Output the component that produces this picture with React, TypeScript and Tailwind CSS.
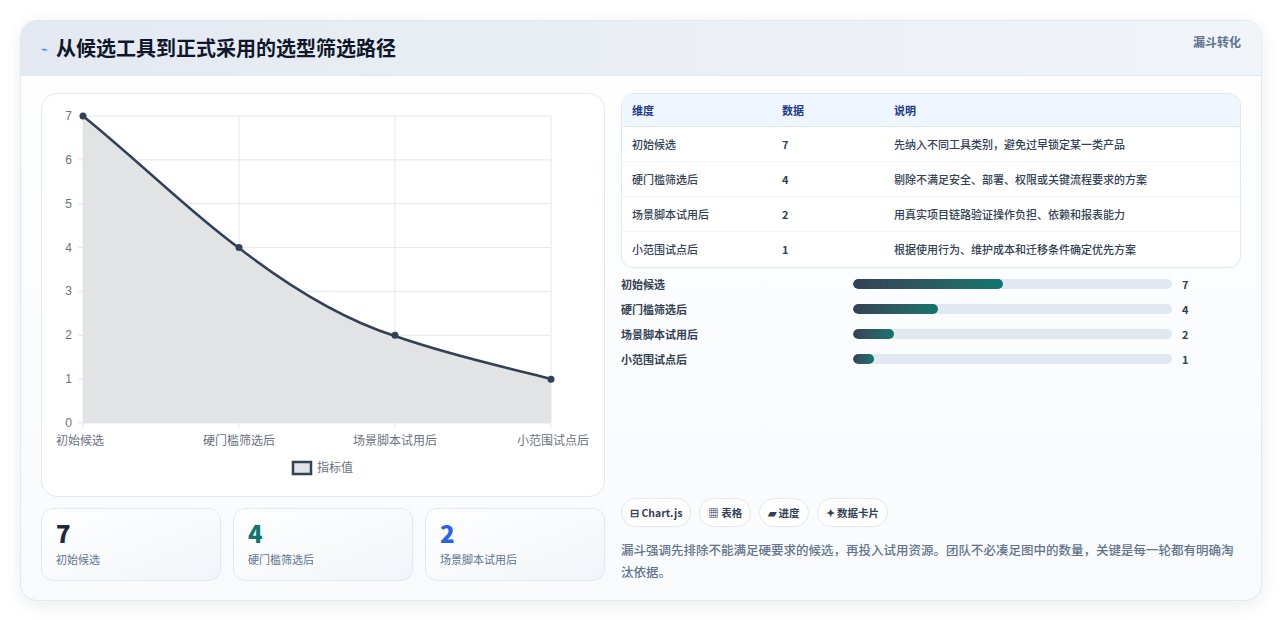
import React from 'react';

const rows = [
  { name: '初始候选', v: 7, note: '先纳入不同工具类别，避免过早锁定某一类产品', w: 47 },
  { name: '硬门槛筛选后', v: 4, note: '剔除不满足安全、部署、权限或关键流程要求的方案', w: 26.5 },
  { name: '场景脚本试用后', v: 2, note: '用真实项目链路验证操作负担、依赖和报表能力', w: 13 },
  { name: '小范围试点后', v: 1, note: '根据使用行为、维护成本和迁移条件确定优先方案', w: 6.5 },
];

const Chart = () => {
  const x0 = 41, x1 = 509, yTop = 22, yBot = 329;
  const ux = (x1 - x0) / 3;
  const uy = (yBot - yTop) / 7;
  const pts = [7, 4, 2, 1].map((v, i) => [x0 + ux * i, yBot - uy * v]);
  const line = 'M41,22 C100,70 150,120 197,154 C250,195 300,225 353,242 C410,262 460,272 509,285';
  return (
    <svg width="563" height="403" className="block">
      {[0, 1, 2, 3, 4, 5, 6, 7].map((v) => (
        <g key={v}>
          <line x1={x0 - 5} x2={x1} y1={yBot - uy * v} y2={yBot - uy * v} stroke="#e5e7eb" />
          <text x={30} y={yBot - uy * v + 4} fontSize="12" fill="#6b7280" textAnchor="end" fontFamily="Liberation Sans">{v}</text>
        </g>
      ))}
      {[0, 1, 2, 3].map((i) => (
        <line key={i} x1={x0 + ux * i} x2={x0 + ux * i} y1={yTop} y2={yBot + 5} stroke="#e5e7eb" />
      ))}
      <path d={`${line} L509,329 L41,329 Z`} fill="#e2e3e5" />
      <path d={line} fill="none" stroke="#334155" strokeWidth="2.5" />
      {pts.map(([x, y], i) => <circle key={i} cx={x} cy={y} r="3.5" fill="#334155" />)}
      {rows.map((r, i) => (
        <text key={i} x={x0 + ux * i} y={351} fontSize="12" fill="#6b7280" textAnchor={i === 0 ? 'start' : i === 3 ? 'end' : 'middle'} dx={i === 0 ? -27 : i === 3 ? 38 : 0} fontFamily="Noto Sans CJK SC">{r.name}</text>
      ))}
      <rect x="251" y="368" width="18" height="12" fill="#e2e3e5" stroke="#334155" strokeWidth="2.5" />
      <text x="275" y="378" fontSize="12" fill="#6b7280" fontFamily="Noto Sans CJK SC">指标值</text>
    </svg>
  );
};

export default function App() {
  return (
    <div className="min-h-[620px] bg-white p-5" style={{ fontFamily: '"Noto Sans CJK SC", "Noto Sans", sans-serif' }}>
      <div className="rounded-2xl border border-slate-200 bg-gradient-to-b from-white to-[#f8fafc] shadow-[0_4px_18px_rgba(15,23,42,0.08)] overflow-hidden">
        <div className="flex h-[55px] items-center justify-between bg-gradient-to-r from-[#e4e9f1] to-[#f1f4f9] border-b border-slate-200 px-5">
          <div className="flex items-center gap-2">
            <span className="text-[11px] text-blue-500">⌁</span>
            <h1 className="text-[20px] font-bold text-[#0f172a]">从候选工具到正式采用的选型筛选路径</h1>
          </div>
          <span className="self-start mt-3 text-[12px] font-semibold text-slate-500">漏斗转化</span>
        </div>
        <div className="flex gap-4 px-5 pt-[17px] pb-[19px]">
          <div className="w-[564px] flex flex-col gap-[11px]">
            <div className="h-[404px] rounded-2xl border border-slate-200 bg-white">
              <Chart />
            </div>
            <div className="grid grid-cols-3 gap-3">
              {[['7', 'text-[#1e293b]', '初始候选'], ['4', 'text-[#0f766e]', '硬门槛筛选后'], ['2', 'text-[#2563eb]', '场景脚本试用后']].map(([n, c, l]) => (
                <div key={l} className="h-[73px] rounded-xl border border-slate-200 bg-gradient-to-br from-white to-[#f1f5f9] px-3.5 pt-2.5">
                  <div className={`text-[24px] font-extrabold leading-7 ${c}`}>{n}</div>
                  <div className="mt-1 text-[11px] text-slate-500">{l}</div>
                </div>
              ))}
            </div>
          </div>
          <div className="flex-1 flex flex-col">
            <div className="rounded-xl border border-slate-200 overflow-hidden bg-white">
              <div className="grid grid-cols-[150px_112px_1fr] h-[33px] items-center bg-[#eff6ff] px-2.5 text-[11px] font-semibold text-[#1e3a8a] border-b border-slate-200">
                <span>维度</span><span>数据</span><span>说明</span>
              </div>
              {rows.map((r, i) => (
                <div key={r.name} className={`grid grid-cols-[150px_112px_1fr] h-[35px] items-center px-2.5 text-[11px] font-medium text-[#334155] ${i < 3 ? 'border-b border-slate-100' : ''}`}>
                  <span>{r.name}</span><span className="font-bold">{r.v}</span><span>{r.note}</span>
                </div>
              ))}
            </div>
            <div className="mt-2.5 flex flex-col gap-[13px]">
              {rows.map((r) => (
                <div key={r.name} className="flex items-center h-[12px] text-[11px] font-semibold text-[#334155]">
                  <span className="w-[232px]">{r.name}</span>
                  <div className="w-[319px] h-[10px] rounded-full bg-[#e2e8f0] overflow-hidden">
                    <div className="h-full rounded-full bg-gradient-to-r from-[#334155] to-[#0f766e]" style={{ width: `${r.w}%` }} />
                  </div>
                  <span className="ml-2.5 font-bold">{r.v}</span>
                </div>
              ))}
            </div>
            <div className="mt-auto flex gap-2">
              {['⊟ Chart.js', '▦ 表格', '▰ 进度', '✦ 数据卡片'].map((t) => (
                <span key={t} className="h-[29px] flex items-center rounded-full border border-slate-200 bg-white px-2 text-[10.5px] font-semibold text-[#334155]">{t}</span>
              ))}
            </div>
            <p className="mt-3 mb-[-2px] text-[12.5px] leading-[22px] text-slate-500 font-medium">漏斗强调先排除不能满足硬要求的候选，再投入试用资源。团队不必凑足图中的数量，关键是每一轮都有明确淘汰依据。</p>
          </div>
        </div>
      </div>
    </div>
  );
}
